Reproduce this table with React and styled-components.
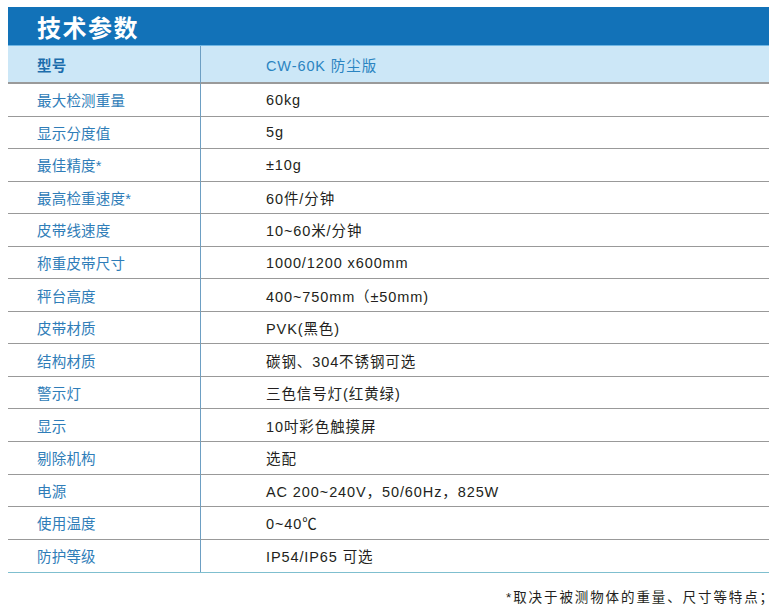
import React from 'react'
import styled, { createGlobalStyle } from 'styled-components'

const GlobalStyle = createGlobalStyle`
  html, body {
    margin: 0;
    padding: 0;
    background: #fff;
  }
  body {
    font-family: "Liberation Sans", "Noto Sans CJK SC", sans-serif;
  }
`

const specs = [
  ['最大检测重量', '60kg'],
  ['显示分度值', '5g'],
  ['最佳精度*', '±10g'],
  ['最高检重速度*', '60件/分钟'],
  ['皮带线速度', '10~60米/分钟'],
  ['称重皮带尺寸', '1000/1200 x600mm'],
  ['秤台高度', '400~750mm（±50mm)'],
  ['皮带材质', 'PVK(黑色)'],
  ['结构材质', '碳钢、304不锈钢可选'],
  ['警示灯', '三色信号灯(红黄绿)'],
  ['显示', '10吋彩色触摸屏'],
  ['剔除机构', '选配'],
  ['电源', 'AC 200~240V，50/60Hz，825W'],
  ['使用温度', '0~40℃'],
  ['防护等级', 'IP54/IP65 可选'],
]

const Page = styled.div`
  width: 780px;
  height: 609px;
  padding: 7px 11px 0 8px;
  box-sizing: border-box;
  overflow: hidden;
`

const TitleBar = styled.div`
  height: 39px;
  background: #1272b8;
  display: flex;
  align-items: center;
  padding-left: 29px;
  color: #fff;
  font-size: 24px;
  font-weight: 700;
  letter-spacing: 1.5px;
  border-bottom: 1px solid #6fb6e3;
  box-sizing: border-box;
`

const Table = styled.div`
  display: grid;
  grid-template-columns: 193px 1fr;
  border-bottom: 1px solid #7fbfcf;
`

const Row = styled.div`
  display: contents;
`

const Cell = styled.div`
  height: ${p => (p.$head ? '38px' : '32.55px')};
  box-sizing: border-box;
  display: flex;
  align-items: center;
  font-size: 14.5px;
  background: ${p => (p.$head ? '#cce7f7' : '#fff')};
  border-bottom: ${p => (p.$last ? 'none' : p.$head ? '2px solid #9a9a9a' : '1px solid #999')};
`

const Label = styled(Cell)`
  padding-left: 29px;
  color: ${p => (p.$head ? '#1c6dac' : '#2f7db8')};
  font-weight: ${p => (p.$head ? 700 : 400)};
  letter-spacing: 0.2px;
  border-right: 1px solid #6d9fc3;
`

const Value = styled(Cell)`
  padding-left: 65px;
  color: ${p => (p.$head ? '#2a84c1' : '#231f20')};
  letter-spacing: 0.9px;
`

const Footnote = styled.div`
  margin-right: -6px;
  padding-top: 13px;
  text-align: right;
  font-size: 13.5px;
  letter-spacing: 1.9px;
  color: #231f20;
`

export default function App() {
  return (
    <Page>
      <GlobalStyle />
      <TitleBar>技术参数</TitleBar>
      <Table>
        <Row>
          <Label $head>型号</Label>
          <Value $head>CW-60K 防尘版</Value>
        </Row>
        {specs.map(([k, v], i) => (
          <Row key={k}>
            <Label $last={i === specs.length - 1}>{k}</Label>
            <Value $last={i === specs.length - 1}>{v}</Value>
          </Row>
        ))}
      </Table>
      <Footnote>*取决于被测物体的重量、尺寸等特点；</Footnote>
    </Page>
  )
}
